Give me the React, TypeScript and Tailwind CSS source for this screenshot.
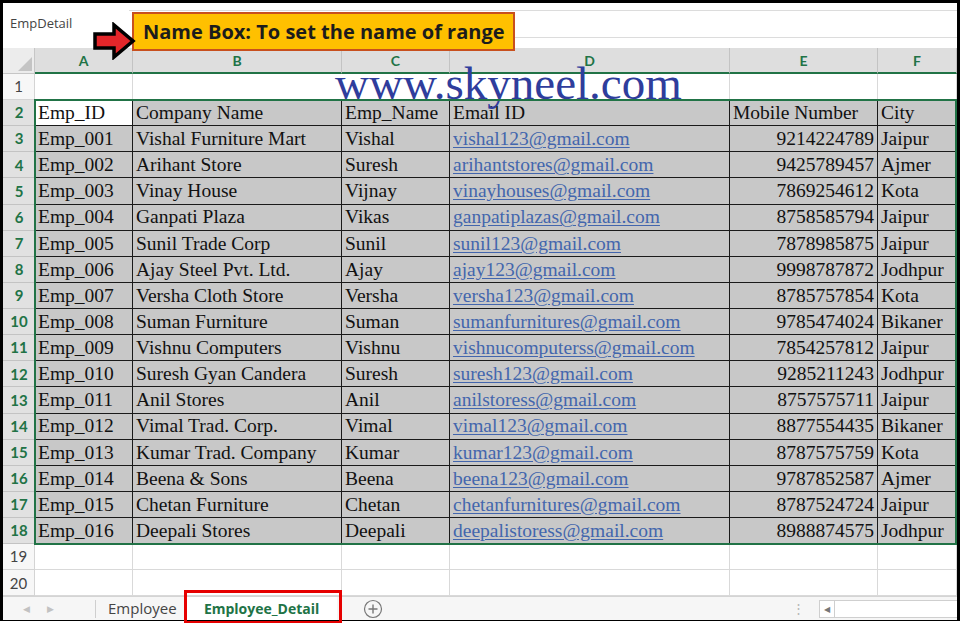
import React from 'react'

const COLS = ['A', 'B', 'C', 'D', 'E', 'F']
const WIDTHS = ['w-[98px]', 'w-[209px]', 'w-[108px]', 'w-[280px]', 'w-[148px]', 'w-[79px]']

const ROWS: string[][] = [
  ['Emp_001', 'Vishal Furniture Mart', 'Vishal', 'vishal123@gmail.com', '9214224789', 'Jaipur'],
  ['Emp_002', 'Arihant Store', 'Suresh', 'arihantstores@gmail.com', '9425789457', 'Ajmer'],
  ['Emp_003', 'Vinay House', 'Vijnay', 'vinayhouses@gmail.com', '7869254612', 'Kota'],
  ['Emp_004', 'Ganpati Plaza', 'Vikas', 'ganpatiplazas@gmail.com', '8758585794', 'Jaipur'],
  ['Emp_005', 'Sunil Trade Corp', 'Sunil', 'sunil123@gmail.com', '7878985875', 'Jaipur'],
  ['Emp_006', 'Ajay Steel Pvt. Ltd.', 'Ajay', 'ajay123@gmail.com', '9998787872', 'Jodhpur'],
  ['Emp_007', 'Versha Cloth Store', 'Versha', 'versha123@gmail.com', '8785757854', 'Kota'],
  ['Emp_008', 'Suman Furniture', 'Suman', 'sumanfurnitures@gmail.com', '9785474024', 'Bikaner'],
  ['Emp_009', 'Vishnu Computers', 'Vishnu', 'vishnucomputerss@gmail.com', '7854257812', 'Jaipur'],
  ['Emp_010', 'Suresh Gyan Candera', 'Suresh', 'suresh123@gmail.com', '9285211243', 'Jodhpur'],
  ['Emp_011', 'Anil Stores', 'Anil', 'anilstoress@gmail.com', '8757575711', 'Jaipur'],
  ['Emp_012', 'Vimal Trad. Corp.', 'Vimal', 'vimal123@gmail.com', '8877554435', 'Bikaner'],
  ['Emp_013', 'Kumar Trad. Company', 'Kumar', 'kumar123@gmail.com', '8787575759', 'Kota'],
  ['Emp_014', 'Beena & Sons', 'Beena', 'beena123@gmail.com', '9787852587', 'Ajmer'],
  ['Emp_015', 'Chetan Furniture', 'Chetan', 'chetanfurnitures@gmail.com', '8787524724', 'Jaipur'],
  ['Emp_016', 'Deepali Stores', 'Deepali', 'deepalistoress@gmail.com', '8988874575', 'Jodhpur'],
]

const HEADERS = ['Emp_ID', 'Company Name', 'Emp_Name', 'Email ID', 'Mobile Number', 'City']

const RowHead: React.FC<{ n: number; selected?: boolean }> = ({ n, selected }) => (
  <div
    className={`w-[32px] shrink-0 flex items-center justify-center border-b text-[15px] ${
      selected
        ? 'bg-[#e1e1e1] border-[#c3c3c3] text-[#217346] font-bold'
        : 'bg-[#f7f7f7] border-[#d4d4d4] border-r text-[#444]'
    }`}
  >
    {n}
  </div>
)

const DataRow: React.FC<{ n: number; cells: string[]; header?: boolean }> = ({ n, cells, header }) => (
  <div className="flex h-[26.125px]">
    <RowHead n={n} selected />
    {cells.map((c, i) => (
      <div
        key={i}
        className={`${WIDTHS[i]} shrink-0 flex items-center px-[3px] border-r border-b border-[#1a1a1a] whitespace-nowrap overflow-hidden font-['Liberation_Serif',serif] text-[19.5px] text-[#111] ${
          header && i === 0 ? 'bg-white' : 'bg-[#c8c8c8]'
        } ${!header && i === 4 ? 'justify-end' : ''}`}
      >
        {!header && i === 3 ? <span className="text-[#4366ad] underline underline-offset-2">{c}</span> : c}
      </div>
    ))}
  </div>
)

const EmptyRow: React.FC<{ n: number }> = ({ n }) => (
  <div className="flex h-[26.125px]">
    <RowHead n={n} />
    {WIDTHS.map((w, i) => (
      <div key={i} className={`${w} shrink-0 border-r border-b border-[#d9d9d9] bg-white`} />
    ))}
  </div>
)

export default function App() {
  return (
    <div className="w-[963px] h-[623px] bg-white font-['Lato',sans-serif]">
      <div className="relative w-[960px] h-[621px] border-[3px] border-black flex flex-col overflow-visible">
        {/* name box + formula bar */}
        <div className="h-[45px] flex items-start pt-[7px] shrink-0">
          <div className="w-[126px] h-[28px] flex items-center pl-[7px] font-['Open_Sans',sans-serif] text-[13px] text-[#444]">
            EmpDetail
          </div>
          <div className="flex-1 h-[28px] border-y border-[#dcdcdc]" />
        </div>

        {/* sheet grid */}
        <div className="relative flex flex-col">
          <div className="flex h-[26px]">
            <div className="w-[32px] shrink-0 relative bg-[#ececec] border-r border-b border-[#c6c6c6]">
              <svg className="absolute right-[2px] bottom-[2px]" width="14" height="14" viewBox="0 0 14 14">
                <path d="M14 0 L14 14 L0 14 Z" fill="#c4c4c4" />
              </svg>
            </div>
            {COLS.map((c, i) => (
              <div
                key={c}
                className={`${WIDTHS[i]} shrink-0 flex items-center justify-center bg-[#dedede] border-r border-[#c3c3c3] border-b-2 border-b-[#217346] text-[#217346] font-bold text-[14px]`}
              >
                {c}
              </div>
            ))}
          </div>

          <div className="flex h-[26px] relative">
            <RowHead n={1} />
            <div className="w-[98px] shrink-0 border-r border-b border-[#d9d9d9]" />
            <div className="w-[209px] shrink-0 border-b border-[#d9d9d9]" />
            <div className="w-[108px] shrink-0 border-b border-[#d9d9d9]" />
            <div className="w-[280px] shrink-0 border-r border-b border-[#d9d9d9]" />
            <div className="w-[148px] shrink-0 border-r border-b border-[#d9d9d9]" />
            <div className="w-[79px] shrink-0 border-r border-b border-[#d9d9d9]" />
            <div className="absolute left-[332px] bottom-[-7px] whitespace-nowrap font-['Liberation_Serif',serif] text-[47px] leading-none text-[#2f3d9c]">
              www.skyneel.com
            </div>
          </div>

          <DataRow n={2} cells={HEADERS} header />
          {ROWS.map((r, i) => (
            <DataRow key={i} n={i + 3} cells={r} />
          ))}
          <EmptyRow n={19} />
          <EmptyRow n={20} />

          {/* selection outline */}
          <div className="absolute left-[31px] top-[51px] w-[923px] h-[446px] border-2 border-[#217346] pointer-events-none" />
        </div>

        {/* sheet tabs */}
        <div className="flex-1 flex items-center bg-[#f6f6f6] border-t border-[#d4d4d4] font-['Open_Sans',sans-serif]">
          <div className="w-[92px] h-full flex items-center gap-[17px] pl-[20px] text-[9px] text-[#c2c2c2]">
            <span>◀</span>
            <span>▶</span>
          </div>
          <div className="h-[18px] border-l border-[#cfcfcf]" />
          <div className="pl-[12px] pr-[10px] text-[15px] text-[#444]">Employee</div>
          <div className="h-full w-[150px] flex items-center justify-center bg-white text-[14px] font-bold text-[#217346]">
            Employee_Detail
          </div>
          <div className="ml-[26px]">
            <svg width="20" height="20" viewBox="0 0 20 20">
              <circle cx="10" cy="10" r="8.5" fill="none" stroke="#777" strokeWidth="1.2" />
              <path d="M10 5.5 V14.5 M5.5 10 H14.5" stroke="#777" strokeWidth="1.4" />
            </svg>
          </div>
          <div className="flex-1" />
          <div className="text-[#b5b5b5] text-[13px] leading-none mr-[14px]">⋮</div>
          <div className="w-[16px] h-[18px] flex items-center justify-center border border-[#cfcfcf] bg-white text-[8px] text-[#777]">
            ◀
          </div>
          <div className="w-[122px] h-[18px] border-y border-[#cfcfcf] bg-white" />
        </div>

        {/* annotation callout */}
        <div className="absolute left-[129px] top-[9px] w-[383px] h-[39px] flex items-center pl-[9px] bg-[#ffc000] border-2 border-[#c8501e] font-['Open_Sans',sans-serif] text-[20px] font-bold text-[#1c1c1c] whitespace-nowrap">
          Name Box: To set the name of range
        </div>
        <svg className="absolute left-[89px] top-[19px]" width="44" height="38" viewBox="0 0 44 38">
          <path d="M3 12 H22 V3 L41 19 L22 35 V26 H3 Z" fill="#e3262a" stroke="#000" strokeWidth="3.5" strokeLinejoin="miter" />
        </svg>

        {/* highlight around active tab */}
        <div className="absolute left-[181px] top-[587px] w-[158px] h-[34px] border-[3px] border-[#e60000]" />
      </div>
    </div>
  )
}
